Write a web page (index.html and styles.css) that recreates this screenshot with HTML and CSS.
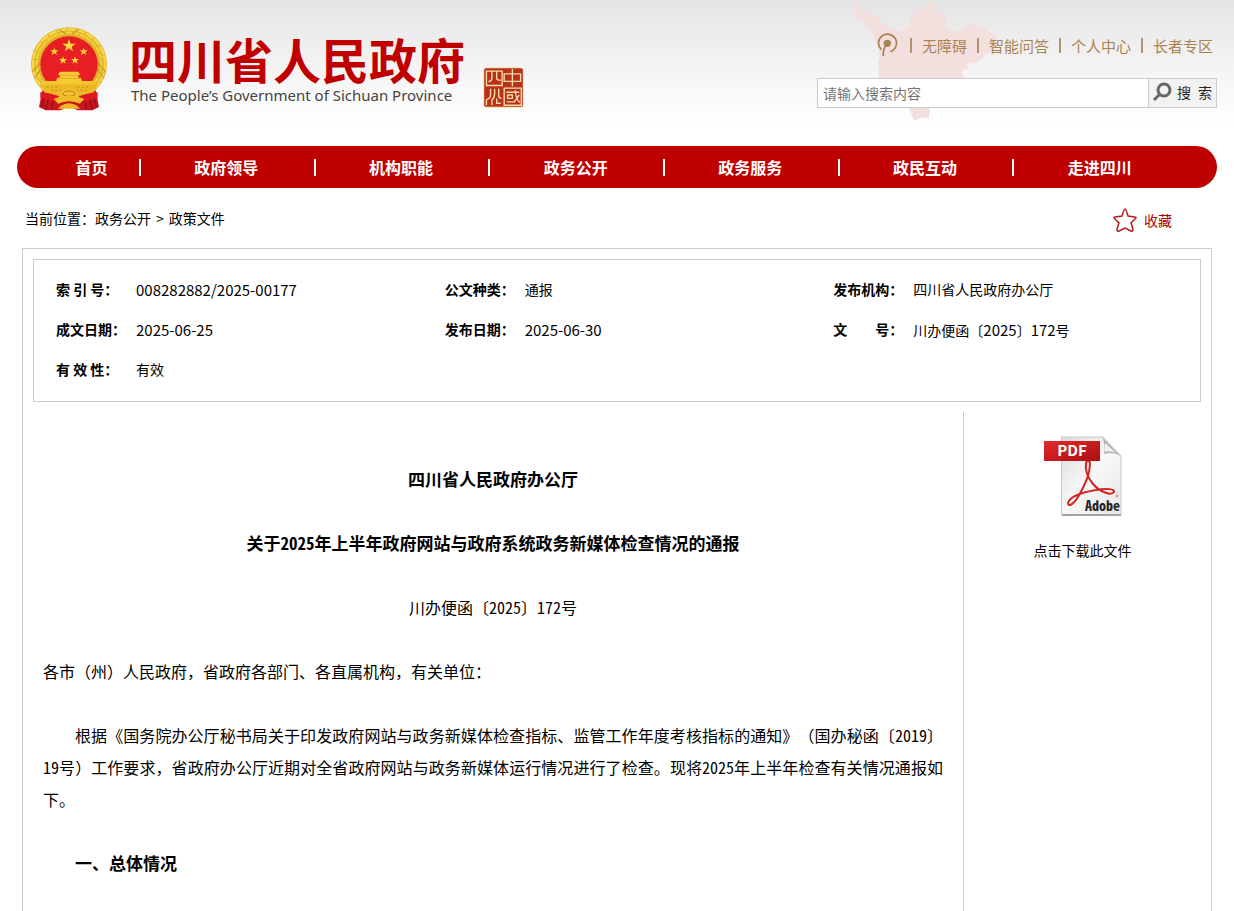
FILE: index.html
```html
<!DOCTYPE html>
<html lang="zh-CN">
<head>
  <meta charset="UTF-8">
  <meta name="viewport" content="width=device-width, initial-scale=1.0">
  <title>四川省人民政府</title>
  <link rel="stylesheet" href="styles.css">
</head>
<body>

<header class="header">
  <div class="wrap header-inner">
    <div class="brand">
      <svg class="emblem" viewBox="0 0 228 252" aria-hidden="true">
        <path d="M34 190 L24 240 L44 250 L88 250 L114 238 L140 250 L184 250 L204 240 L194 190Z" fill="#c8151d"/>
        <ellipse cx="114" cy="111" rx="114" ry="110" fill="#e2b12c"/>
        <ellipse cx="114" cy="111" rx="108" ry="104" fill="none" stroke="#f6da48" stroke-width="7" stroke-dasharray="26 3"/>
        <ellipse cx="114" cy="111" rx="97" ry="94" fill="none" stroke="#f3cf3c" stroke-width="7" stroke-dasharray="18 3"/>
        <path d="M4 136L30 104M10 152L34 122M224 136L198 104M218 152L194 122M84 8L104 20M144 8L124 20" stroke="#b98a1c" stroke-width="3"/>
        <ellipse cx="114" cy="112" rx="86" ry="84" fill="#e81e25"/>
        <path d="M114 36l5 14h15l-12 9 4 14-12-9-12 9 4-14-12-9h15z" fill="#fbdc3c"/>
        <g fill="#fbd03a">
          <path d="M70 62l3 8 9 0-7 6 3 8-8-5-8 5 3-8-7-6 9 0z"/>
          <path d="M158 62l3 8 9 0-7 6 3 8-8-5-8 5 3-8-7-6 9 0z"/>
          <path d="M96 88l3 8 9 0-7 6 3 8-8-5-8 5 3-8-7-6 9 0z"/>
          <path d="M132 88l3 8 9 0-7 6 3 8-8-5-8 5 3-8-7-6 9 0z"/>
        </g>
        <path d="M86 134h56l5 10h-5v8h8l2 10h-76l2-10h8v-8h-5z" fill="#f8cb35"/>
        <path d="M86 145h56M80 154h68" stroke="#d59a22" stroke-width="2"/>
        <path d="M42 162h144v12H42z" fill="#f6c830"/>
        <path d="M26 172h176l-18 28-46 4-24-8-24 8-46-4z" fill="#ecb924"/>
        <path d="M48 180h40M140 180h40M60 190h32M136 190h32" stroke="#c9771a" stroke-width="3" stroke-dasharray="5 8"/>
        <path d="M28 196c22 0 44 8 58 12l-16 14c-14 0-30-4-42-8z" fill="#df1820"/>
        <path d="M200 196c-22 0-44 8-58 12l16 14c14 0 30-4 42-8z" fill="#df1820"/>
        <ellipse cx="114" cy="202" rx="30" ry="17" fill="#f2c32c"/>
        <ellipse cx="114" cy="200" rx="18" ry="8" fill="none" stroke="#b87416" stroke-width="3"/>
        <path d="M68 216c24-12 68-12 92 0l-14 14c-20-10-44-10-64 0z" fill="#f0bd28"/>
        <path d="M90 236c16-10 32-10 48 0l10 9H80z" fill="#edb825"/>
        <path d="M38 214l-6 28M52 218l-8 30M66 224l-4 24M190 214l6 28M176 218l8 30M162 224l4 24" stroke="#920d1c" stroke-width="4"/>
      </svg>
      <div class="brand-text">
        <h1 class="site-name">四川省人民政府</h1>
        <p class="site-name-en">The People’s Government of Sichuan Province</p>
      </div>
      <svg class="seal" viewBox="0 0 120 120" aria-hidden="true">
        <rect x="2" y="2" width="116" height="116" rx="6" fill="#b9301b" stroke="#fbeeb8" stroke-width="3"/>
        <g fill="none" stroke="#f6dda5" stroke-width="4">
          <path d="M10 12h46v42H10zM26 13v20q0 8-10 10M40 13v20q0 6 12 6"/>
          <path d="M62 20h48v22H62zM86 6v50"/>
          <path d="M22 64v18q0 10-12 14v16M34 64v14q0 12-8 18v16M46 64v20q0 6 8 8M40 92v14h12"/>
          <path d="M62 62h50v50H62zM68 74h38M72 82h14v10H72zM70 102h20M94 68q2 26 14 36M106 82l-16 22"/>
        </g>
      </svg>
    </div>

    <div class="tools">
      <svg class="map" viewBox="120 0 450 369" aria-hidden="true">
        <path d="M130 35L142 5 152 8 152 28 175 38 200 50 220 65 240 85 250 80 262 95 285 90 305 70 305 45 325 40 330 20 350 20 362 0 378 15 382 38 408 45 412 62 405 80 430 90 455 95 470 75 500 75 530 85 540 95 562 105 566 130 555 150 530 160 520 175 495 190 470 190 480 205 455 215 465 232 468 250 400 250 380 280 365 300 360 355 340 352 315 362 300 325 280 290 230 270 210 250 208 190 212 165 200 120 180 85 165 70 145 60z" fill="#f4dfdf"/>
      </svg>
      <nav class="quick-links">
        <svg class="access-icon" viewBox="0 0 63 72" aria-hidden="true">
          <path d="M13 50A27 27 0 1 1 40 56" fill="none" stroke="#a98352" stroke-width="5"/>
          <circle cx="31" cy="31" r="11" fill="#a98352"/>
          <path d="M29 34Q17 48 19 69" fill="none" stroke="#a98352" stroke-width="5"/>
        </svg>
        <a href="#">无障碍</a>
        <a href="#">智能问答</a>
        <a href="#">个人中心</a>
        <a href="#">长者专区</a>
      </nav>
      <form class="search">
        <input type="text" name="q" placeholder="请输入搜索内容" aria-label="请输入搜索内容">
        <button type="submit">
          <svg viewBox="0 0 20 20" aria-hidden="true">
            <circle cx="12" cy="8" r="6" fill="none" stroke="#666" stroke-width="3"/>
            <path d="M8 12L2 18" stroke="#666" stroke-width="3"/>
          </svg>
          <span>搜&ensp;索</span>
        </button>
      </form>
    </div>
  </div>
</header>

<nav class="wrap main-nav">
  <a class="home" href="#">首页</a>
  <a href="#">政府领导</a>
  <a href="#">机构职能</a>
  <a href="#">政务公开</a>
  <a href="#">政务服务</a>
  <a href="#">政民互动</a>
  <a href="#">走进四川</a>
</nav>

<div class="wrap location">
  <div class="crumbs">当前位置：<a href="#">政务公开</a><span class="arrow">&gt;</span><a href="#">政策文件</a></div>
  <button class="favorite" type="button">
    <svg viewBox="0 0 24 24" aria-hidden="true">
      <path d="M12 1Q13 1 15 8L22 9Q24 9 22 11L18 15 20 21Q20 24 18 23L12 20 6 23Q4 24 4 21L6 15 2 11Q0 9 2 9L9 8Q11 1 12 1z" fill="none" stroke="#b01c1c" stroke-width="1.5"/>
    </svg>
    <span>收藏</span>
  </button>
</div>

<main class="panel">
  <div class="meta">
    <table>
      <tr>
        <th>索 引 号：</th><td><span class="num">008282882/2025-00177</span></td>
        <th>公文种类：</th><td>通报</td>
        <th>发布机构：</th><td>四川省人民政府办公厅</td>
      </tr>
      <tr>
        <th>成文日期：</th><td><span class="num">2025-06-25</span></td>
        <th>发布日期：</th><td><span class="num">2025-06-30</span></td>
        <th>文　　号：</th><td>川办便函〔<span class="num">2025</span>〕<span class="num">172</span>号</td>
      </tr>
      <tr>
        <th>有 效 性：</th><td>有效</td>
        <th></th><td></td>
        <th></th><td></td>
      </tr>
    </table>
  </div>

  <div class="columns">
    <article class="article">
      <h2>四川省人民政府办公厅</h2>
      <h2>关于2025年上半年政府网站与政府系统政务新媒体检查情况的通报</h2>
      <p class="doc-no">川办便函〔2025〕172号</p>
      <p>各市（州）人民政府，省政府各部门、各直属机构，有关单位：</p>
      <p class="indent">根据《国务院办公厅秘书局关于印发政府网站与政务新媒体检查指标、监管工作年度考核指标的通知》（国办秘函〔2019〕19号）工作要求，省政府办公厅近期对全省政府网站与政务新媒体运行情况进行了检查。现将2025年上半年检查有关情况通报如下。</p>
      <h3 class="indent">一、总体情况</h3>
    </article>

    <aside class="download">
      <a href="#">
        <svg viewBox="0 0 78 80" aria-hidden="true">
          <defs>
            <linearGradient id="sheet" x1="0" y1="0" x2="1" y2="1">
              <stop offset="0" stop-color="#dcdcdc"/>
              <stop offset="0.5" stop-color="#f8f8f8"/>
              <stop offset="1" stop-color="#e6e6e6"/>
            </linearGradient>
            <linearGradient id="label" x1="0" y1="0" x2="1" y2="1">
              <stop offset="0" stop-color="#e32a2a"/>
              <stop offset="1" stop-color="#a80f14"/>
            </linearGradient>
          </defs>
          <path d="M17.5 1H59L77 20V79H17.5z" fill="url(#sheet)" stroke="#c8c8c8"/>
          <path d="M18 79H77" stroke="#8f8f8f" stroke-width="1.5"/>
          <path d="M58 1L77 20Q68 15 60 18 62 9 58 1z" fill="#b4b4b4"/>
          <path d="M61 7L72 17Q66 14 61 16z" fill="#f1f1f1"/>
          <path d="M42 28C42 24 46 24 46 28C46 38 40 51 34 61C29 69 24 71 24 67C26 60 40 56 52 54C62 52 71 53 70 56C67 60 56 56 49 48C43 41 41 33 42 28z" fill="none" stroke="#d5231f" stroke-width="2"/>
          <circle cx="73" cy="60" r="1" fill="none" stroke="#d5231f" stroke-width="0.5"/>
          <rect x="0" y="5" width="56" height="20" fill="url(#label)"/>
          <text class="pdf-label" x="28" y="20" text-anchor="middle">PDF</text>
          <text class="pdf-brand" x="76" y="75" text-anchor="end">Adobe</text>
        </svg>
        <span>点击下载此文件</span>
      </a>
    </aside>
  </div>
</main>

</body>
</html>
```
FILE: styles.css
```css
* {
  box-sizing: border-box;
}

body {
  margin: 0;
  min-height: 100vh;
  display: flex;
  flex-direction: column;
  font-family: "Noto Sans CJK SC", sans-serif;
  font-size: 14px;
  color: #000;
  background-color: #fff;
  text-spacing-trim: space-all;
}

h1, h2, h3, p {
  margin: 0;
}

a {
  color: inherit;
  text-decoration: none;
}

.wrap {
  width: 100%;
  max-width: 1200px;
  margin: 0 auto;
}

/* header */
.header {
  padding: 27px 0 35px;
  background: linear-gradient(#e4e4e4, #f0f0f0 50px, #fff 125px);
}

.header-inner {
  display: flex;
  justify-content: space-between;
}

.brand {
  display: flex;
  align-items: center;
  padding-left: 14px;
}

.emblem {
  width: 76px;
  height: 84px;
}

.brand-text {
  margin-left: 22px;
}

.site-name {
  font-size: 48px;
  line-height: 48px;
  font-weight: bold;
  color: #c00000;
}

.site-name-en {
  margin-top: 4px;
  padding-left: 2px;
  font-family: "Noto Sans", sans-serif;
  font-size: 15px;
  line-height: 18px;
  color: #444;
}

.seal {
  width: 41px;
  height: 41px;
  margin-left: 18px;
  margin-bottom: 3px;
  align-self: flex-end;
}

.tools {
  position: relative;
  width: 400px;
  padding-top: 5px;
}

.map {
  position: absolute;
  top: -27px;
  left: 32px;
  width: 150px;
  height: 123px;
}

.quick-links {
  position: relative;
  display: flex;
  justify-content: flex-end;
  align-items: center;
  height: 26px;
  padding-right: 4px;
  font-size: 15px;
  color: #a98352;
}

.access-icon {
  width: 21px;
  height: 24px;
  margin-right: 2px;
}

.quick-links a {
  display: flex;
  align-items: center;
}

.quick-links a::before {
  content: "";
  width: 2px;
  height: 15px;
  margin: 0 10px;
  background-color: #b3946a;
}

.search {
  position: relative;
  display: flex;
  height: 30px;
  margin-top: 20px;
  border: 1px solid #ccc;
}

.search input {
  flex: 1;
  min-width: 0;
  padding: 0 5px;
  border: none;
  font-family: inherit;
  font-size: 14px;
  background-color: #fff;
}

.search input::placeholder {
  color: #757575;
}

.search button {
  display: flex;
  align-items: center;
  justify-content: space-between;
  width: 68px;
  padding: 0 4px 2px 3px;
  border: none;
  border-left: 1px solid #ccc;
  font-family: inherit;
  font-size: 14px;
  color: #222;
  background-color: #f2f2f2;
  cursor: pointer;
}

.search button svg {
  width: 20px;
  height: 20px;
}

/* navigation */
.main-nav {
  display: flex;
  align-items: center;
  height: 42px;
  padding: 0 30px 0 27px;
  border-radius: 21px;
  background-color: #be0000;
  color: #fff;
  font-size: 16px;
  font-weight: bold;
}

.main-nav a {
  flex: 1;
  position: relative;
  text-align: center;
}

.main-nav .home {
  flex: 0 0 95px;
}

.main-nav a + a::before {
  content: "";
  position: absolute;
  left: 0;
  top: 4px;
  width: 2px;
  height: 17px;
  background-color: #fff;
}

.location {
  display: flex;
  justify-content: space-between;
  height: 60px;
  padding: 20px 45px 0 8px;
}

.crumbs {
  line-height: 20px;
}

.arrow {
  margin: 0 5px;
}

.favorite {
  display: flex;
  align-items: center;
  gap: 7px;
  height: 24px;
  padding: 0;
  border: none;
  background: none;
  font-family: inherit;
  font-size: 14px;
  color: #b00000;
  cursor: pointer;
}

.favorite svg {
  width: 24px;
  height: 24px;
}

/* document */
.panel {
  flex: 1;
  display: flex;
  flex-direction: column;
  width: calc(100% - 44px);
  max-width: 1190px;
  margin: 0 auto;
  padding: 10px 10px 0;
  border: 1px solid #ccc;
  border-bottom: none;
}

.meta {
  padding: 9px 0 12px;
  border: 1px solid #ccc;
}

.meta table {
  width: 100%;
  border-collapse: collapse;
  table-layout: fixed;
}

.meta th,
.meta td {
  height: 40px;
  padding: 0;
  text-align: left;
  white-space: nowrap;
}

.meta th {
  width: 102px;
  padding-left: 22px;
}

.num {
  font-size: 15px;
}

.columns {
  flex: 1;
  display: flex;
  margin-top: 10px;
}

.article {
  flex: 1;
  padding: 51px 20px 0 10px;
  border-right: 1px solid #ccc;
  font-family: "Noto Sans Mono CJK SC", "Noto Sans CJK SC", sans-serif;
  font-size: 16px;
  line-height: 32px;
  text-align: justify;
}

.article h2,
.article h3 {
  font-size: 17px;
  font-weight: bold;
}

.article h2,
.article p {
  margin-bottom: 32px;
}

.article h2,
.article .doc-no {
  text-align: center;
}

.article .indent {
  text-indent: 32px;
}

.download {
  width: 237px;
  padding-top: 24px;
  text-align: center;
}

.download a {
  display: flex;
  flex-direction: column;
  align-items: center;
  gap: 24px;
  line-height: 20px;
}

.download svg {
  width: 78px;
  height: 80px;
}

.pdf-label {
  font-family: "Noto Sans CJK SC", sans-serif;
  font-size: 15px;
  font-weight: bold;
  fill: #fff;
}

.pdf-brand {
  font-family: "Noto Sans Mono CJK SC", "Noto Sans CJK SC", sans-serif;
  font-size: 14px;
  font-weight: bold;
  fill: #222;
}
```
